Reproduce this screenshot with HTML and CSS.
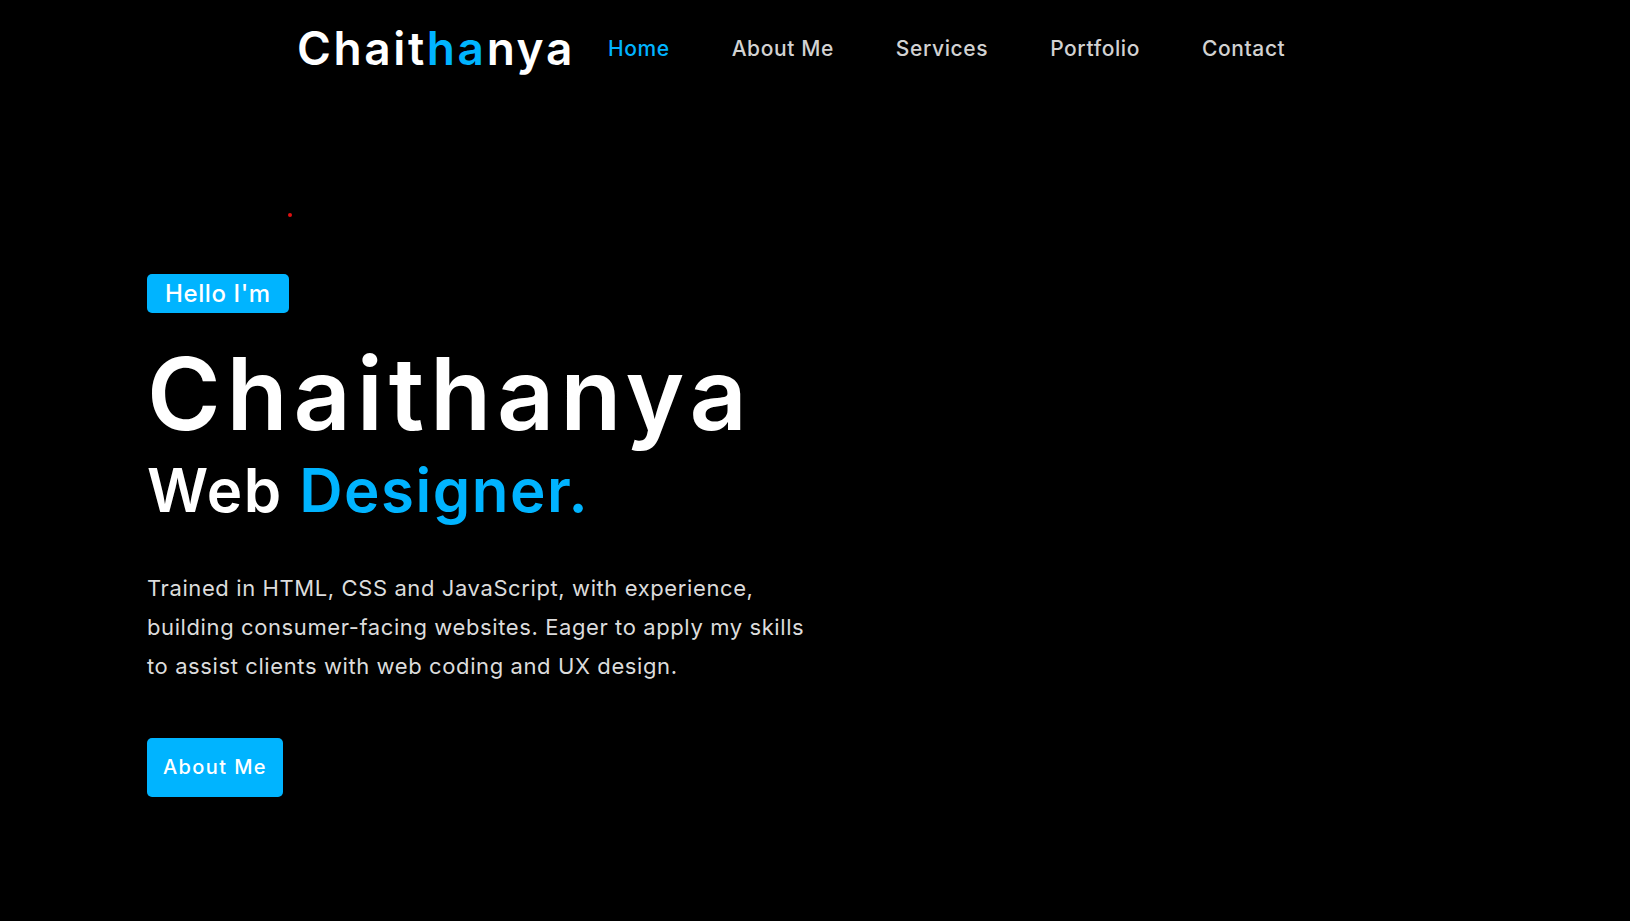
FILE: index.html
```html
<!DOCTYPE html>
<html lang="en">
<head>
<meta charset="utf-8">
<title>Chaithanya</title>
<link rel="stylesheet" href="styles.css">
</head>
<body>
<header class="header">
  <a class="logo" href="#">Chait<span class="accent">ha</span>nya</a>
  <nav class="nav">
    <a class="nav-link active" href="#">Home</a>
    <a class="nav-link" href="#">About Me</a>
    <a class="nav-link" href="#">Services</a>
    <a class="nav-link" href="#">Portfolio</a>
    <a class="nav-link" href="#">Contact</a>
  </nav>
</header>
<main class="hero">
  <span class="cursor-dot"></span>
  <div class="hero-content">
    <span class="badge">Hello I'm</span>
    <h1 class="hero-name">Chaithanya</h1>
    <h2 class="hero-role">Web <span class="accent">Designer.</span></h2>
    <p class="hero-text">Trained in HTML, CSS and JavaScript, with experience,<br>building consumer-facing websites. Eager to apply my skills<br>to assist clients with web coding and UX design.</p>
    <a class="btn" href="#">About Me</a>
  </div>
</main>
</body>
</html>
```
FILE: styles.css
```css
* {
  box-sizing: border-box;
}

html, body {
  margin: 0;
  padding: 0;
  background: #000;
}

body {
  font-family: Inter, "Open Sans", "Liberation Sans", sans-serif;
  color: #fff;
  min-height: 921px;
}

a {
  text-decoration: none;
}

.accent {
  color: #00b4ff;
}

.header {
  display: flex;
  align-items: center;
  height: 96px;
  padding-left: 297px;
}

.logo {
  color: #fff;
  font-size: 46px;
  font-weight: 600;
  letter-spacing: 2.6px;
  margin-right: 2px;
}

.nav {
  display: flex;
}

.nav-link {
  color: #d2d2d2;
  font-size: 21px;
  font-weight: 500;
  letter-spacing: 0.6px;
  padding: 0 31px;
}

.nav-link.active {
  color: #00b4ff;
}

.hero {
  position: relative;
  padding: 178px 0 0 147px;
}

.cursor-dot {
  position: absolute;
  left: 288px;
  top: 117px;
  width: 4px;
  height: 4px;
  border-radius: 50%;
  background: #e01010;
}

.hero-content {
  display: flex;
  flex-direction: column;
  align-items: flex-start;
}

.badge {
  display: inline-block;
  background: #00b4ff;
  color: #fff;
  font-size: 24px;
  font-weight: 500;
  letter-spacing: 0.6px;
  line-height: 31px;
  padding: 4px 18px;
  border-radius: 5px;
}

.hero-name {
  margin: 31px 0 0;
  font-size: 100px;
  font-weight: 600;
  line-height: 100px;
  letter-spacing: 5.8px;
}

.hero-role {
  margin: 16px 0 0;
  font-size: 60px;
  font-weight: 600;
  line-height: 60px;
  letter-spacing: 1.5px;
}

.hero-text {
  margin: 49px 0 0;
  color: #dcdcdc;
  font-size: 22px;
  font-weight: 400;
  letter-spacing: 0.6px;
  line-height: 39px;
}

.btn {
  margin-top: 52px;
  display: inline-block;
  background: #00b4ff;
  color: #fff;
  font-size: 20px;
  font-weight: 500;
  letter-spacing: 1.4px;
  line-height: 59px;
  height: 59px;
  padding: 0 16px;
  border-radius: 5px;
}
```
